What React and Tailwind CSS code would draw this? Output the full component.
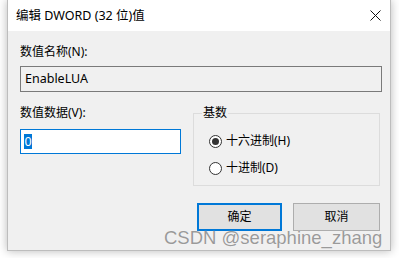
export default function App() {
  const font = { fontFamily: '"Noto Sans", "Noto Sans CJK SC", sans-serif' };
  return (
    <div className="relative w-[399px] h-[258px] bg-white overflow-hidden" style={font}>
      <div className="ml-[7px] w-[384px] h-[251px] flex flex-col border border-t-0 border-[#bdbdbd] shadow-[0_0_9px_rgba(0,0,0,0.28)] text-[12px] leading-[16px] text-black">
        {/* Title bar */}
        <div className="h-[31px] bg-white flex items-center justify-between pl-[8px] pr-[9px]">
          <span className="text-[12.5px]">编辑 DWORD (32 位)值</span>
          <svg width="11" height="11" viewBox="0 0 11 11">
            <path d="M0.5 0.5 L10.5 10.5 M10.5 0.5 L0.5 10.5" stroke="#111" strokeWidth="1" />
          </svg>
        </div>
        {/* Body */}
        <div className="flex-1 bg-[#f0f0f0] flex flex-col pl-[12px] pr-[10px] pt-[13px]">
          <div className="h-[16px]">数值名称(N):</div>
          <div className="mt-[6px] h-[26px] w-[362px] border border-[#7a7a7a] bg-[#f0f0f0] flex items-center pl-[4px] text-[12.5px]">
            EnableLUA
          </div>
          <div className="flex mt-[13px]">
            <div className="flex flex-col w-[161px]">
              <div className="h-[16px]">数值数据(V):</div>
              <div className="mt-[8px] h-[25px] w-[161px] border border-[#0078d7] bg-white flex items-center pl-[3px]">
                <span className="bg-[#0078d7] text-white h-[15px] w-[8px] flex items-center justify-center text-[12.5px]">0</span>
              </div>
            </div>
            <div className="ml-[12px] w-[189px] relative mt-[8px] h-[73px] border border-[#dcdcdc]">
              <span className="absolute left-[8px] top-[-9px] bg-[#f0f0f0] px-[1px] leading-[16px]">基数</span>
              <div className="flex flex-col pl-[15px] pt-[19px] gap-[11px]">
                <div className="flex items-center gap-[4px] h-[16px]">
                  <span className="w-[13px] h-[13px] rounded-full border border-[#333] bg-white flex items-center justify-center">
                    <span className="w-[7px] h-[7px] rounded-full bg-[#333]" />
                  </span>
                  <span>十六进制(H)</span>
                </div>
                <div className="flex items-center gap-[4px] h-[16px]">
                  <span className="w-[13px] h-[13px] rounded-full border border-[#333] bg-white" />
                  <span>十进制(D)</span>
                </div>
              </div>
            </div>
          </div>
          <div className="flex justify-end gap-[11px] mt-[17px] pr-[0px]">
            <div className="w-[85px] h-[28px] border-2 border-[#0078d7] bg-[#e1e1e1] flex items-center justify-center">确定</div>
            <div className="w-[87px] h-[28px] border border-[#adadad] bg-[#e1e1e1] flex items-center justify-center">取消</div>
          </div>
        </div>
      </div>
      <div
        className="absolute left-[164px] top-[226px] text-[18.5px] leading-[24px] text-[#9a9a9a] whitespace-nowrap"
        style={{ fontFamily: '"Liberation Sans", Arial, sans-serif', textShadow: '0 0 1px #fff' }}
      >
        CSDN @seraphine_zhang
      </div>
    </div>
  );
}
